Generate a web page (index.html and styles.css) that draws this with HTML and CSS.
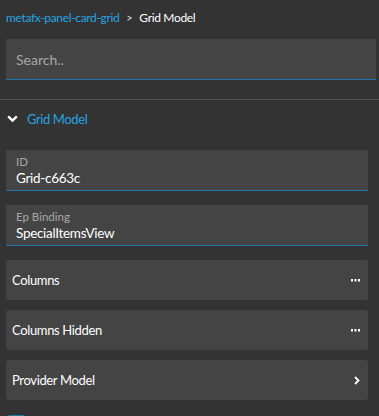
FILE: index.html
```html
<!DOCTYPE html>
<html lang="en">
<head>
    <meta charset="UTF-8">
    <meta name="viewport" content="width=device-width, initial-scale=1.0">
    <title>Grid Model</title>
    <link rel="stylesheet" href="styles.css">
</head>
<body>
    <div class="breadcrumb">
        <a class="crumb-link">metafx-panel-card-grid</a>
        <span class="crumb-sep">&gt;</span>
        <span class="crumb-current">Grid Model</span>
    </div>
    <div class="search-wrap">
        <input class="search" type="text" placeholder="Search..">
    </div>
    <div class="divider"></div>

    <div class="panel">
        <div class="section-head">
            <svg class="chev-down" width="11" height="8" viewBox="0 0 11 8"><path d="M1.2 1.3 L5.5 5.6 L9.8 1.3" fill="none" stroke="#fff" stroke-width="2.4"/></svg>
            <span>Grid Model</span>
        </div>

        <div class="field">
            <label>ID</label>
            <div class="value">Grid-c663c</div>
        </div>
        <div class="field">
            <label>Ep Binding</label>
            <div class="value">SpecialItemsView</div>
        </div>

        <div class="card">
            <span>Columns</span>
            <svg width="9" height="3" viewBox="0 0 9 3"><rect x="0" y="0" width="2" height="2.5" fill="#fff"/><rect x="3.5" y="0" width="2" height="2.5" fill="#fff"/><rect x="7" y="0" width="2" height="2.5" fill="#fff"/></svg>
        </div>
        <div class="card">
            <span>Columns Hidden</span>
            <svg width="9" height="3" viewBox="0 0 9 3"><rect x="0" y="0" width="2" height="2.5" fill="#fff"/><rect x="3.5" y="0" width="2" height="2.5" fill="#fff"/><rect x="7" y="0" width="2" height="2.5" fill="#fff"/></svg>
        </div>
        <div class="card">
            <span>Provider Model</span>
            <svg width="6" height="9" viewBox="0 0 6 9"><path d="M1 1 L4.5 4.5 L1 8" fill="none" stroke="#fff" stroke-width="1.8"/></svg>
        </div>

        <div class="checkbox"></div>
    </div>
</body>
</html>
```

FILE: styles.css
```css
* { margin: 0; padding: 0; box-sizing: border-box; }
body { font-family: Lato, "Open Sans", sans-serif; background: #333333; color: #fff; overflow: hidden; width: 379px; height: 416px; }

.breadcrumb { padding: 8px 6px 0; height: 28px; line-height: 20px; font-size: 12px; letter-spacing: -0.35px; display: flex; gap: 7px; }
.crumb-link { color: #27a4e3; }
.crumb-sep { color: #ddd; font-size: 11px; }
.crumb-current { color: #fff; }

.search-wrap { padding: 11px 3px 0 6px; }
.search { display: block; width: 100%; height: 41px; background: #444444; border: none; border-bottom: 1px solid #1d76aa; padding: 0 10px; font-family: inherit; font-size: 14px; color: #fff; outline: none; }
.search::placeholder { color: #a8a8a8; }

.divider { height: 1px; background: #505050; margin-top: 19px; }

.panel { padding: 0 11px 0 6px; }
.section-head { display: flex; align-items: center; gap: 9px; height: 20px; margin: 9px 0 21px 1px; font-size: 13px; letter-spacing: -0.4px; color: #27a4e3; }

.field { background: #444444; border-bottom: 1px solid #1d76aa; height: 41px; padding: 5px 10px 0; margin-bottom: 14px; }
.field label { display: block; font-size: 11.5px; color: #a8a8a8; line-height: 14px; }
.field .value { font-size: 13.5px; letter-spacing: -0.3px; line-height: 18px; color: #fff; }

.card { background: #444444; border-radius: 3px; height: 40px; display: flex; align-items: center; justify-content: space-between; padding: 0 8px 0 6px; font-size: 13px; letter-spacing: -0.35px; margin-bottom: 10px; }

.checkbox { width: 17px; height: 14px; border-radius: 2px; background: #1d76aa; margin: 15px 0 0 2px; }
```
